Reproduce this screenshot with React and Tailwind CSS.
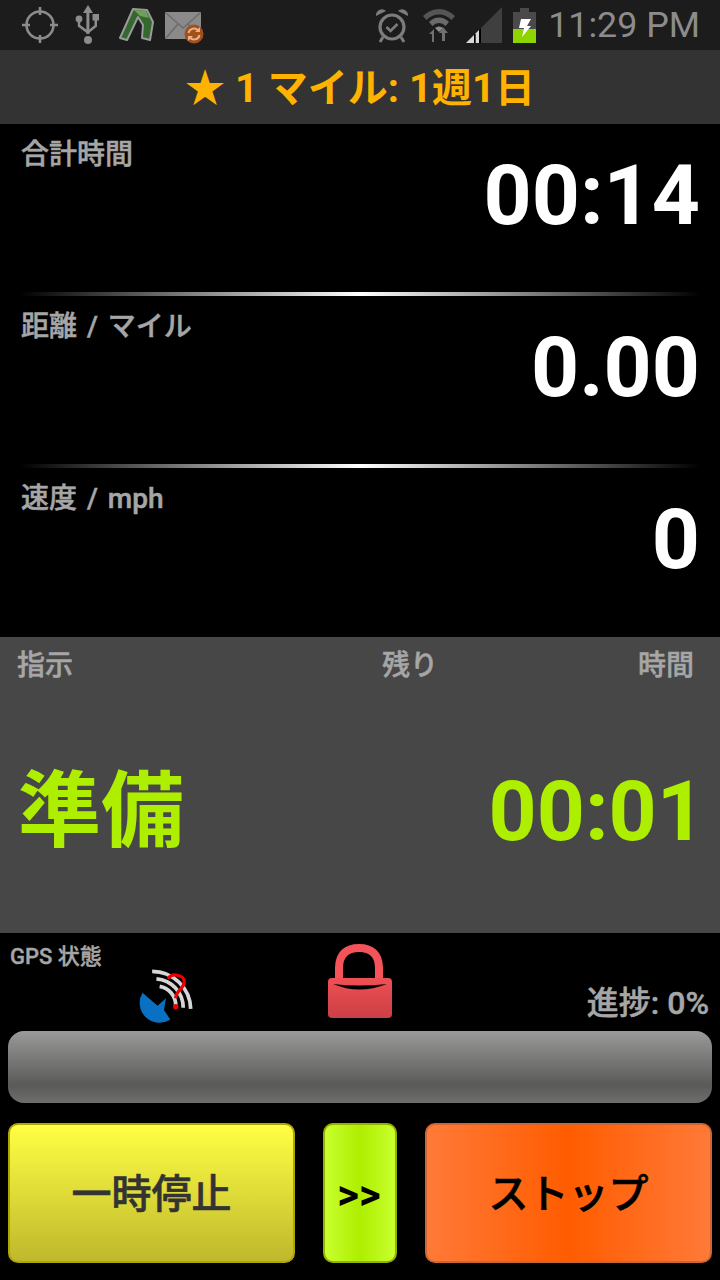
const font = { fontFamily: '"Roboto", "Noto Sans CJK JP", sans-serif' };

function Metric({ label, unit, value, last }) {
  return (
    <div className="flex flex-col">
      <div className={`relative px-[21px] ${last ? "h-[169px]" : "h-[168px]"}`}>
        <div className="pt-[12px] text-[28px] leading-[38px] font-medium text-[#a6a6a6] [word-spacing:3px] [-webkit-text-stroke:0.5px_#a6a6a6]">
          {label}
          {unit && <span> / {unit}</span>}
        </div>
        <div className="absolute right-[20px] top-[24px] text-[84px] leading-[96px] font-bold text-white">{value}</div>
      </div>
      {!last && (
        <div className="mx-[20px] h-[4px] bg-[linear-gradient(90deg,#000000,#ffffff_50%,#000000)]" />
      )}
    </div>
  );
}

function StatusLeft() {
  return (
    <div className="flex items-center">
      <svg width="36" height="38" viewBox="0 0 36 38" className="ml-[22px]" fill="none" stroke="#8c8c8c" strokeWidth="2.6">
        <circle cx="18" cy="19" r="13.5" />
        <path d="M18 1v8M18 29v8M0 19h8M28 19h8" />
      </svg>
      <svg width="26" height="40" viewBox="0 0 26 40" className="ml-[17px]" fill="#8c8c8c">
        <path d="M13 0l5 8h-3.600v21h-3V8H8z" />
        <circle cx="13" cy="35" r="4" />
        <circle cx="4" cy="14" r="3.400" />
        <rect x="17.500" y="9" width="6.500" height="6.500" />
        <path d="M2.800 15h2.400v5l6.800 5v3.200L2.800 21.500zM19.500 15H22v6.500l-8 6.500v-3.200l5.500-4.500z" />
      </svg>
      <svg width="36" height="36" viewBox="0 0 36 36" className="ml-[17px]">
        <path d="M2 31L15 2L29 3L35 15L32 33L24 31L25 18L20 10L9 33z" fill="#34682e" stroke="#9a9a9a" strokeWidth="2" strokeLinejoin="round" />
        <path d="M16 3L28 4L31 11L22 9z" fill="#6fa055" />
      </svg>
      <div className="relative ml-[11px] mt-[10px] h-[37px] w-[37px] self-start">
        <svg width="36" height="27" viewBox="0 0 36 27" className="block">
          <rect width="36" height="27" rx="1" fill="#8a8a8a" />
          <path d="M1 1l17 15L35 1M1 26l12-14M35 26L23 12" fill="none" stroke="#6c6c6c" strokeWidth="1.500" />
        </svg>
        <svg width="20" height="20" viewBox="0 0 20 20" className="absolute left-[19px] top-[12px]">
          <circle cx="10" cy="10" r="9.500" fill="#a2501a" />
          <path d="M4.500 9a5.500 5.500 0 0 1 10-2M15.500 11a5.500 5.500 0 0 1-10 2" fill="none" stroke="#e8b090" strokeWidth="2" />
          <path d="M16 3v5h-5zM4 17v-5h5z" fill="#e8b090" />
        </svg>
      </div>
    </div>
  );
}

function StatusRight() {
  return (
    <div className="flex items-center">
      <svg width="34" height="36" viewBox="0 0 34 36">
        <circle cx="17" cy="20" r="12" fill="none" stroke="#7c7c7c" strokeWidth="3.200" />
        <path d="M11.500 20l4 4 7-7" fill="none" stroke="#7c7c7c" strokeWidth="2.600" />
        <path d="M1 9a6 6 0 0 1 10-5zM33 9a6 6 0 0 0-10-5z" fill="#7c7c7c" />
        <path d="M8 30l-3 5M26 30l3 5" stroke="#7c7c7c" strokeWidth="3" />
      </svg>
      <svg width="32" height="36" viewBox="0 0 32 36" className="ml-[14px]">
        <path d="M0 9a22 22 0 0 1 32 0l-3.500 4a17 17 0 0 0-25 0z" fill="#555555" />
        <path d="M6 15a13.500 13.500 0 0 1 20 0l-3.500 4a8.500 8.500 0 0 0-13 0z" fill="#6a6a6a" />
        <path d="M12 21a6 6 0 0 1 8 0l-4 4z" fill="#8c8c8c" />
        <path d="M9 35v-8H6l5-5v13zM20 20l5 6h-3v8h-3v-8h-3z" fill="#707070" />
      </svg>
      <svg width="36" height="36" viewBox="0 0 36 36" className="ml-[11px]">
        <path d="M36 0v36H0z" fill="#3f3f3f" />
        <path d="M13 23L15 21V36H13z" fill="#000000" />
        <path d="M9.500 26.500L13 23V36H9.500z" fill="#d8d8d8" />
        <path d="M8 28L9.500 26.500V36H8z" fill="#000000" />
        <path d="M0 36L8 28V36z" fill="#d8d8d8" />
      </svg>
      <svg width="23" height="35" viewBox="0 0 23 35" className="ml-[11px]">
        <rect x="7" y="0" width="9" height="4" fill="#4a4a4a" />
        <rect x="0" y="4" width="23" height="17" fill="#4a4a4a" />
        <rect x="0" y="21" width="23" height="14" fill="#8ed400" />
        <path d="M8 11h10l-4 7h4L9 29l2-9H6z" fill="#ffffff" />
      </svg>
      <div className="ml-[12px] mr-[20px] text-[35.800px] leading-[50px] font-normal text-[#8c8c8c]">11:29 PM</div>
    </div>
  );
}

function GpsIcon() {
  return (
    <svg width="60" height="60" viewBox="0 0 56 56">
      <path d="M7 25L21 37L29 30L27 41L33 50A18.500 18.500 0 0 1 7 25z" fill="#0a70c4" />
      <g fill="none" stroke="#d6d6d6" strokeWidth="3.500">
        <path d="M16 5A36 36 0 0 1 52 40" />
        <path d="M20 12A27 27 0 0 1 45 39" />
        <path d="M23 19A18 18 0 0 1 38 37" />
      </g>
      <path d="M31 12c3-6 15-4 15 3 0 6-8 8-8 15" fill="none" stroke="#f00000" strokeWidth="3" />
      <circle cx="38" cy="38" r="2.500" fill="#f00000" />
    </svg>
  );
}

function LockIcon() {
  return (
    <svg width="66" height="76" viewBox="0 0 66 76">
      <defs>
        <linearGradient id="lockg" x1="0" y1="0" x2="0" y2="1">
          <stop offset="0" stopColor="#f04f54" />
          <stop offset="1" stopColor="#c94044" />
        </linearGradient>
      </defs>
      <path d="M12 36V25C12 11 20 5 32 5s20 6 20 20v11" fill="none" stroke="#f45359" strokeWidth="8" />
      <rect x="1" y="35" width="64" height="40" rx="4" fill="url(#lockg)" />
      <path d="M6 41Q32 44 60 41Q32 52 6 41z" fill="#000000" />
    </svg>
  );
}

export default function App() {
  return (
    <div className="flex h-[1280px] w-[720px] flex-col overflow-hidden bg-black" style={font}>
      <div className="flex h-[50px] shrink-0 items-center justify-between bg-[#1c1c1c]">
        <StatusLeft />
        <StatusRight />
      </div>
      <div className="flex h-[74px] shrink-0 items-center justify-center bg-[#333333] pt-[4px] text-[40px] font-bold text-[#ffb300]">
        ★ 1 マイル: 1週1日
      </div>
      <div className="flex h-[513px] shrink-0 flex-col">
        <Metric label="合計時間" value="00:14" />
        <Metric label="距離 / マイル" value="0.00" />
        <Metric label="速度" unit="mph" value="0" last />
      </div>
      <div className="flex h-[296px] shrink-0 flex-col bg-[#474747]">
        <div className="mt-[10px] flex pl-[17px] pr-[26px] text-[28px] leading-[38px] font-medium text-[#a6a6a6] [-webkit-text-stroke:0.5px_#a6a6a6]">
          <span>指示</span>
          <span className="ml-[309px]">残り</span>
          <span className="ml-auto">時間</span>
        </div>
        <div className="mt-[71px] flex items-center justify-between pl-[18px] pr-[15px] font-bold text-[#aeee00]">
          <span className="text-[83px] leading-[112px]">準備</span>
          <span className="text-[84px] leading-[96px]">00:01</span>
        </div>
      </div>
      <div className="relative h-[98px] shrink-0">
        <div className="pl-[10px] pt-[11px] text-[22px] leading-[26px] font-medium text-[#a6a6a6] [-webkit-text-stroke:0.4px_#a6a6a6]">GPS 状態</div>
        <div className="absolute left-[135px] top-[33px]"><GpsIcon /></div>
        <div className="absolute left-[327px] top-[10px]"><LockIcon /></div>
        <div className="absolute right-[11px] top-[50px] text-[32px] leading-[40px] font-medium text-[#a6a6a6] [-webkit-text-stroke:0.5px_#a6a6a6]">進捗: 0%</div>
      </div>
      <div className="mx-[8px] h-[72px] shrink-0 rounded-[16px] bg-[linear-gradient(180deg,#9a9a9a_0%,#5a5a58_75%,#6e6e6e_100%)]" />
      <div className="mx-[8px] mt-[20px] flex h-[140px] shrink-0 justify-between">
        <div className="flex w-[287px] items-center justify-center rounded-[10px] border-2 border-[#b0a800] bg-[linear-gradient(180deg,#ffff44,#bfb82c)] pt-[4px] text-[40px] font-medium text-[#333333] [-webkit-text-stroke:0.6px_#333333]">一時停止</div>
        <div className="ml-[28px] flex w-[74px] items-center justify-center rounded-[10px] border-2 border-[#98b000] bg-[linear-gradient(90deg,#c8ff2e,#aeee00_50%,#c8ff2e)] pt-[2px] pr-[2px] text-[42px] font-bold text-black">&gt;&gt;</div>
        <div className="ml-[28px] flex w-[287px] items-center justify-center rounded-[10px] border-2 border-[#cc6633] bg-[linear-gradient(90deg,#ff7a38,#ff5c00_50%,#ff7a38)] pt-[4px] text-[40px] font-medium text-black [-webkit-text-stroke:0.6px_#000000]">ストップ</div>
      </div>
    </div>
  );
}
